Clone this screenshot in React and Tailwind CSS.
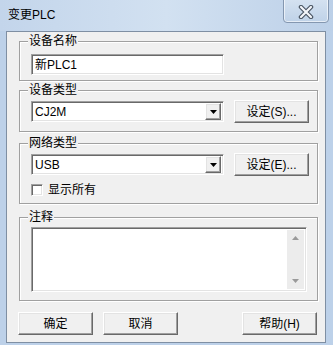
import React from 'react'

const font = { fontFamily: '"Liberation Sans", "Noto Sans CJK SC", sans-serif' }

const sunken =
  'border border-t-[#a0a0a0] border-l-[#a0a0a0] border-r-white border-b-white shadow-[inset_1px_1px_0_#696969,inset_-1px_-1px_0_#e3e3e3] bg-white'
const raised =
  'border border-t-white border-l-white border-r-[#696969] border-b-[#696969] shadow-[inset_-1px_-1px_0_#a0a0a0,inset_1px_1px_0_#e3e3e3] bg-[#f0f0f0]'

const Group = ({ label, className, children }) => (
  <div
    className={`relative border border-[#a0a0a0] shadow-[inset_1px_1px_0_#fff,1px_1px_0_#fff] pl-[11px] pt-[9px] ${className}`}
  >
    <span className="absolute left-[8px] top-[-8px] bg-[#f0f0f0] px-[1px] leading-[14px]">{label}</span>
    {children}
  </div>
)

const Button = ({ children, className = '' }) => (
  <div className={`${raised} flex items-center justify-center ${className}`}>{children}</div>
)

const Combo = ({ value }) => (
  <div className={`${sunken} w-[193px] h-[21px] flex items-center pl-[3px] pr-[2px]`}>
    <span className="flex-1">{value}</span>
    <div className={`${raised} w-[16px] h-[17px] flex items-center justify-center`}>
      <svg width="7" height="4" viewBox="0 0 7 4">
        <path d="M0 0h7L3.5 4z" fill="#000" />
      </svg>
    </div>
  </div>
)

export default function App() {
  return (
    <div className="w-[333px] h-[345px] bg-[#bdd1e9] relative overflow-hidden text-[12px] text-black" style={font}>
      {/* title bar */}
      <div className="h-[31px] bg-gradient-to-r from-[#c3d5eb] via-[#d2e1f1] to-[#bcd0e8] flex items-center pl-[8px] pb-[1px]">
        <span>变更PLC</span>
      </div>
      <div className="absolute left-[283px] top-[-3px] w-[46px] h-[26px] rounded-b-[4px] border border-[#8497b0] bg-gradient-to-b from-[#d6e3f1] to-[#bfd2e8] shadow-[inset_0_0_0_1px_rgba(255,255,255,0.6)] flex items-center justify-center pt-[3px]">
        <svg width="16" height="14" viewBox="0 0 16 14">
          <path d="M3 2l10 10M13 2L3 12" stroke="#4a5563" strokeWidth="4.5" strokeLinecap="round" />
          <path d="M3 2l10 10M13 2L3 12" stroke="#f4f7fb" strokeWidth="2.2" strokeLinecap="round" />
        </svg>
      </div>

      {/* client area */}
      <div className="absolute left-[6px] top-[31px] w-[320px] h-[312px] border border-[#7f8fa3] bg-[#f0f0f0] pl-[12px] pr-[7px] pt-[9px]">
        <Group label="设备名称" className="h-[40px] pt-[12px]">
          <div className={`${sunken} w-[193px] h-[21px] flex items-center pl-[3px]`}>新PLC1</div>
        </Group>

        <Group label="设备类型" className="h-[42px] mt-[9px]">
          <div className="flex items-center gap-[10px]">
            <Combo value="CJ2M" />
            <Button className="w-[75px] h-[23px]">设定(S)...</Button>
          </div>
        </Group>

        <Group label="网络类型" className="h-[61px] mt-[11px]">
          <div className="flex items-center gap-[10px]">
            <Combo value="USB" />
            <Button className="w-[75px] h-[23px]">设定(E)...</Button>
          </div>
          <div className="flex items-center gap-[5px] mt-[7px]">
            <div className={`${sunken} w-[12px] h-[12px]`} />
            <span className="leading-[14px]">显示所有</span>
          </div>
        </Group>

        <Group label="注释" className="h-[84px] mt-[13px]">
          <div className={`${sunken} w-[276px] h-[65px] flex justify-end p-[2px]`}>
            <div className="w-[17px] h-full bg-[#ececec] flex flex-col items-center justify-between py-[6px]">
              <svg width="7" height="4" viewBox="0 0 7 4">
                <path d="M0 4h7L3.5 0z" fill="#9a9a9a" />
              </svg>
              <svg width="7" height="4" viewBox="0 0 7 4">
                <path d="M0 0h7L3.5 4z" fill="#9a9a9a" />
              </svg>
            </div>
          </div>
        </Group>

        <div className="flex mt-[11px] ml-[-1px]">
          <Button className="w-[75px] h-[23px]">确定</Button>
          <Button className="w-[75px] h-[23px] ml-[10px]">取消</Button>
          <Button className="w-[75px] h-[23px] ml-auto mr-[1px]">帮助(H)</Button>
        </div>
      </div>
    </div>
  )
}
